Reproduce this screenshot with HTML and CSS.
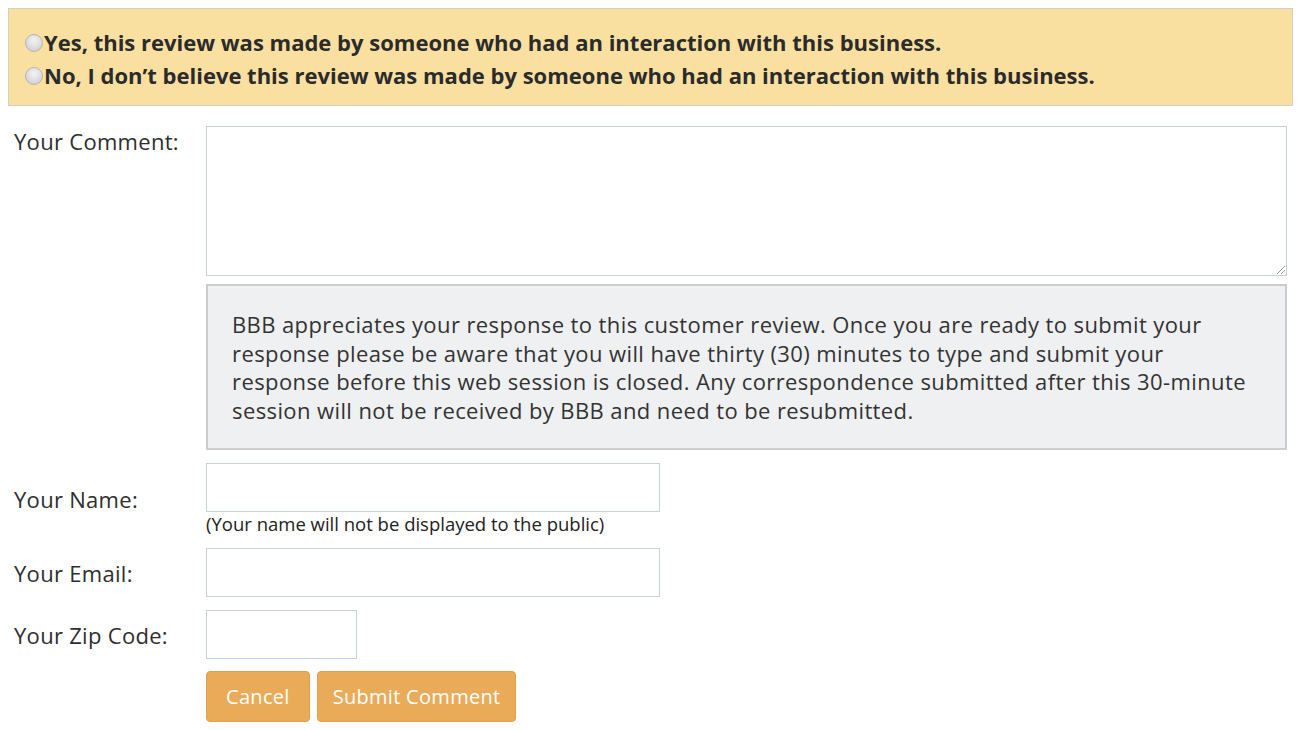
FILE: index.html
```html
<!DOCTYPE html>
<html>
<head>
<meta charset="utf-8">
<link rel="stylesheet" href="styles.css">
</head>
<body>
<div class="choice-box">
  <label class="choice"><span class="radio"></span>Yes, this review was made by someone who had an interaction with this business.</label>
  <label class="choice"><span class="radio"></span>No, I don’t believe this review was made by someone who had an interaction with this business.</label>
</div>
<div class="form">
  <div class="row row-top">
    <div class="label">Your Comment:</div>
    <div class="field">
      <div class="textarea"><span class="grip"></span></div>
      <div class="notice">BBB appreciates your response to this customer review. Once you are ready to submit your<br>response please be aware that you will have thirty (30) minutes to type and submit your<br>response before this web session is closed. Any correspondence submitted after this 30-minute<br>session will not be received by BBB and need to be resubmitted.</div>
    </div>
  </div>
  <div class="row row-name">
    <div class="label">Your Name:</div>
    <div class="field">
      <div class="input"></div>
      <div class="hint">(Your name will not be displayed to the public)</div>
    </div>
  </div>
  <div class="row row-email">
    <div class="label">Your Email:</div>
    <div class="field"><div class="input"></div></div>
  </div>
  <div class="row row-zip">
    <div class="label">Your Zip Code:</div>
    <div class="field"><div class="input input-zip"></div></div>
  </div>
  <div class="row row-buttons">
    <div class="label"></div>
    <div class="field buttons">
      <button class="btn btn-cancel">Cancel</button>
      <button class="btn btn-submit">Submit Comment</button>
    </div>
  </div>
</div>
</body>
</html>
```
FILE: styles.css
```css
body {
  margin: 8px;
  font-family: "Open Sans", "Liberation Sans", sans-serif;
  color: #333;
  background: #fff;
}
.choice-box {
  background: #fae0a0;
  border: 1.5px solid #cfcfcf;
  padding: 17px 16px 13px 16px;
}
.choice {
  display: flex;
  align-items: center;
  font-weight: bold;
  font-size: 22px;
  line-height: 33px;
  color: #2b2b2b;
}
.radio {
  width: 18px;
  height: 18px;
  border-radius: 50%;
  background: radial-gradient(circle at 50% 35%, #f3f3f3 0%, #d6d6d6 70%, #c2c2c2 100%);
  border: 1px solid #b5b5b5;
  box-sizing: border-box;
  margin-right: 1px;
  flex: none;
}
.form {
  padding: 20px 6px 0 6px;
}
.row {
  display: flex;
  align-items: center;
}
.row-top { align-items: flex-start; }
.label {
  width: 192px;
  flex: none;
  font-size: 22px;
  line-height: 30px;
  letter-spacing: 0.3px;
  color: #2e2e2e;
}
.field { flex: 1; }
.textarea {
  height: 150px;
  border: 1.5px solid #c9d0dd;
  box-sizing: border-box;
  position: relative;
}
.grip {
  position: absolute;
  right: 1px;
  bottom: 1px;
  width: 8px;
  height: 8px;
  background: linear-gradient(135deg, transparent 0 45%, #999 45% 52%, transparent 52% 70%, #999 70% 77%, transparent 77%);
}
.notice {
  margin-top: 8px;
  background: #eff0f1;
  border: 2px solid #cdcdcd;
  padding: 24px 16px 24px 24px;
  font-size: 22px;
  line-height: 28.5px;
  letter-spacing: 0.4px;
  color: #333;
}
.row-name { margin-top: 13px; }
.input {
  width: 454px;
  height: 49px;
  border: 1.5px solid #c9d0dd;
  box-sizing: border-box;
  background: #fff;
}
.input-zip { width: 151px; }
.hint {
  font-size: 18.5px;
  line-height: 23px;
  color: #222;
}
.row-email { margin-top: 13px; }
.row-zip { margin-top: 13px; }
.row-buttons { margin-top: 12px; }
.buttons { display: flex; gap: 7px; }
.btn {
  height: 51px;
  background: #eaab58;
  border: 1px solid #e2a04c;
  border-radius: 4px;
  color: #fff;
  font-family: inherit;
  font-size: 20px;
  letter-spacing: 0.3px;
  padding: 0 19px;
}
.btn-cancel { padding: 0 19px; }
.btn-submit { padding: 0 15px; }
```
